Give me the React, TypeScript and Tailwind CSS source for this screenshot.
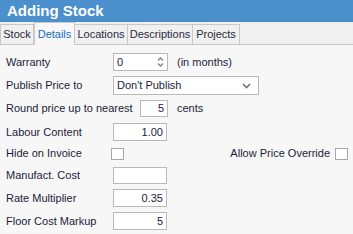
import React from "react";

const font = { fontFamily: '"Liberation Sans", Arial, sans-serif' };

function Tab({ label, active, w }: { label: string; active?: boolean; w: number }) {
  if (active) {
    return (
      <div
        className="h-[23px] -mb-px bg-[#f7f7f7] border border-b-0 border-[#c8c8c8] flex items-center justify-center text-[11px] text-[#1a6dc2] relative z-10 whitespace-nowrap"
        style={{ width: w }}
      >
        {label}
      </div>
    );
  }
  return (
    <div
      className="h-[20px] border border-l-0 first:border-l border-b-0 border-[#c8c8c8] flex items-center justify-center text-[11px] text-[#2a2a3c] whitespace-nowrap"
      style={{ width: w }}
    >
      {label}
    </div>
  );
}

function Label({ children }: { children: React.ReactNode }) {
  return <div className="w-[107px] shrink-0 text-[11px] text-[#1c1c3a] leading-none whitespace-nowrap">{children}</div>;
}

function Box({ value, w, h = 18, align = "right" }: { value?: string; w: number; h?: number; align?: "right" | "left" }) {
  return (
    <div
      className={`border border-[#b9b9b9] bg-white text-[11px] text-[#1c1c3a] flex items-center px-[3px] ${align === "right" ? "justify-end" : "justify-start"}`}
      style={{ width: w, height: h }}
    >
      {value}
    </div>
  );
}

function Check() {
  return <div className="w-[13px] h-[12px] border border-[#a8a8a8] bg-white" />;
}

export default function App() {
  return (
    <div className="w-[353px] h-[234px] bg-[#f7f7f7] overflow-hidden" style={font}>
      <div className="h-[22px] bg-[#4b8fcc] flex items-center pl-[7px] text-white font-bold text-[15px]">
        Adding Stock
      </div>
      <div className="h-[23px] bg-[#f0f0f0] border-b border-[#c8c8c8] flex items-end">
        <Tab label="Stock" w={34} />
        <Tab label="Details" active w={41} />
        <Tab label="Locations" w={53} />
        <Tab label="Descriptions" w={65} />
        <Tab label="Projects" w={47} />
      </div>
      <div className="pl-[6px] pt-[8px] flex flex-col">
        <div className="flex items-center h-[18px]">
          <Label>Warranty</Label>
          <div className="w-[55px] h-[18px] border border-[#b9b9b9] bg-white flex items-center justify-between pl-[3px] pr-[3px] text-[11px] text-[#1c1c3a]">
            <span>0</span>
            <svg width="7" height="12" viewBox="0 0 7 12" className="text-[#808080]">
              <path d="M1 4.5 L3.5 2 L6 4.5" fill="none" stroke="currentColor" strokeWidth="1.3" />
              <path d="M1 7.5 L3.5 10 L6 7.5" fill="none" stroke="currentColor" strokeWidth="1.3" />
            </svg>
          </div>
          <span className="ml-[9px] text-[11px] text-[#1c1c3a]">(in months)</span>
        </div>
        <div className="flex items-center h-[19px] mt-[5px]">
          <Label>Publish Price to</Label>
          <div className="w-[146px] h-[19px] border border-[#b9b9b9] bg-white flex items-center justify-between pl-[3px] pr-[7px] text-[11px] text-[#1c1c3a]">
            <span>Don't Publish</span>
            <svg width="9" height="6" viewBox="0 0 9 6" className="text-[#707070]">
              <path d="M1 1 L4.5 4.5 L8 1" fill="none" stroke="currentColor" strokeWidth="1.6" />
            </svg>
          </div>
        </div>
        <div className="flex items-center h-[17px] mt-[5px]">
          <div className="w-[134px] shrink-0 text-[11px] text-[#1c1c3a] whitespace-nowrap">Round price up to nearest</div>
          <Box value="5" w={28} h={17} />
          <span className="ml-[9px] text-[11px] text-[#1c1c3a]">cents</span>
        </div>
        <div className="flex items-center h-[18px] mt-[6px]">
          <Label>Labour Content</Label>
          <Box value="1.00" w={54} />
        </div>
        <div className="flex items-center h-[17px] mt-[4px]">
          <div className="w-[105px] shrink-0 text-[11px] text-[#1c1c3a] whitespace-nowrap">Hide on Invoice</div>
          <Check />
          <div className="flex-1 flex items-center justify-end pr-[5px]">
            <span className="text-[11px] text-[#1c1c3a] mr-[5px] whitespace-nowrap">Allow Price Override</span>
            <Check />
          </div>
        </div>
        <div className="flex items-center h-[17px] mt-[5px]">
          <Label>Manufact. Cost</Label>
          <Box w={54} h={17} />
        </div>
        <div className="flex items-center h-[18px] mt-[5px]">
          <Label>Rate Multiplier</Label>
          <Box value="0.35" w={54} />
        </div>
        <div className="flex items-center h-[18px] mt-[5px]">
          <Label>Floor Cost Markup</Label>
          <Box value="5" w={54} />
        </div>
      </div>
    </div>
  );
}
